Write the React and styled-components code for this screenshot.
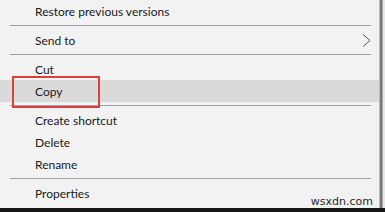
import React from 'react';
import styled, { createGlobalStyle } from 'styled-components';

const Global = createGlobalStyle`
  html, body { margin: 0; padding: 0; background: #f2f2f2; }
  body { font-family: Lato, "Noto Sans", sans-serif; }
`;

const Page = styled.div`
  width: 385px;
  height: 212px;
  display: flex;
  flex-direction: column;
  overflow: hidden;
`;

const Menu = styled.div`
  position: relative;
  flex: 1;
  display: flex;
  flex-direction: column;
  background: #f2f2f2;
  box-shadow: inset -2px 0 #e8e8e8, inset -3px 0 #a8a8a8, inset -5px 0 #7a7a7a, inset -6px 0 #bdbdbd;
`;

const Item = styled.div`
  position: relative;
  height: 22px;
  flex: none;
  display: flex;
  align-items: center;
  padding-left: 35px;
  margin-right: 6px;
  font-size: 12px;
  color: #1a1a1a;
  background: ${p => (p.$hover ? '#dadada' : 'transparent')};
`;

const Separator = styled.div`
  flex: none;
  height: 1px;
  margin: 3px 14px 3px 10px;
  background: #a0a0a0;
`;

const Chevron = styled.svg`
  position: absolute;
  right: 8px;
  top: 5px;
`;

const Outline = styled.div`
  position: absolute;
  left: 12px;
  top: -4px;
  width: 84px;
  height: 28px;
  border: 2px solid #d9413f;
`;

const Watermark = styled.div`
  position: absolute;
  right: 12px;
  bottom: 0px;
  font-family: "DejaVu Sans", sans-serif;
  font-size: 11px;
  color: #2a2a2a;
`;

const Bar = styled.div`
  height: 4px;
  flex: none;
  background: #151515;
`;

export default function App() {
  return (
    <Page>
      <Global />
      <Menu>
        <Item>Restore previous versions</Item>
        <Separator />
        <Item>
          Send to
          <Chevron width="9" height="13" viewBox="0 0 9 13">
            <polyline points="1,0.5 8,6.5 1,12.5" fill="none" stroke="#555" strokeWidth="1" />
          </Chevron>
        </Item>
        <Separator />
        <Item>Cut</Item>
        <Item $hover>
          Copy
          <Outline />
        </Item>
        <Separator />
        <Item>Create shortcut</Item>
        <Item>Delete</Item>
        <Item>Rename</Item>
        <Separator />
        <Item>Properties</Item>
        <Watermark>wsxdn.com</Watermark>
      </Menu>
      <Bar />
    </Page>
  );
}
